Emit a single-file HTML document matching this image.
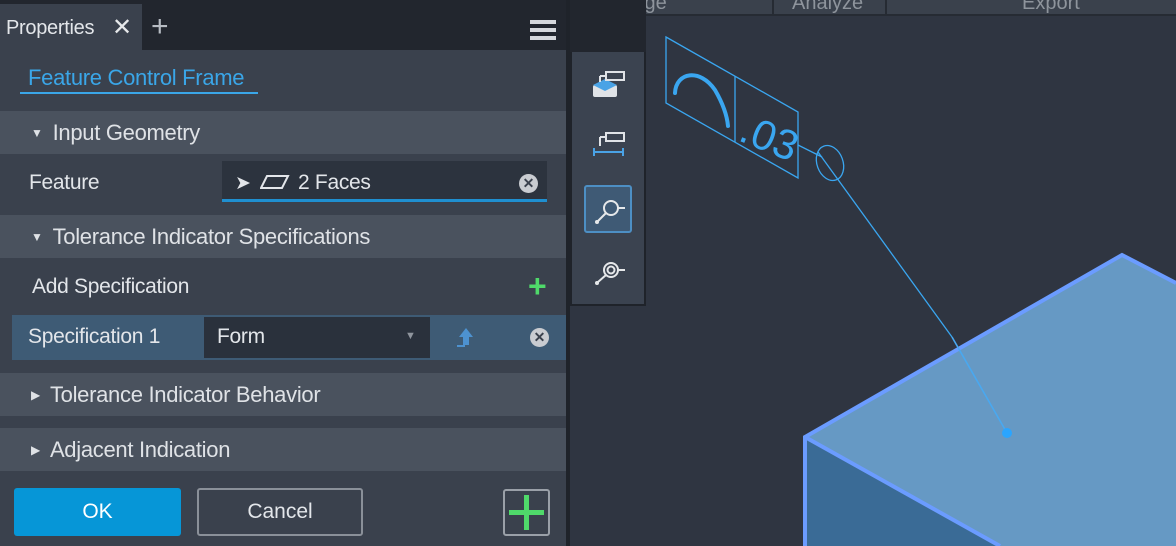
<!DOCTYPE html>
<html><head><style>
*{margin:0;padding:0;box-sizing:border-box}
body{width:1176px;height:546px;overflow:hidden;background:#2f3541;font-family:"Liberation Sans",sans-serif;position:relative;color:#e6e8ea}
.a{position:absolute}
.hdr{position:absolute;left:0;width:566px;height:43px;background:#4a525e;font-size:22px;color:#dfe2e6;line-height:43px;padding-left:31px;letter-spacing:-0.3px}
.tri{font-size:12px;margin-right:10px;position:relative;top:-3px}
.lbl{position:absolute;font-size:20px;color:#e3e6ea;letter-spacing:-0.3px}
.xc{position:absolute;width:19px;height:19px;border-radius:50%;background:#c9ccd1;color:#3a414d;font-size:14px;font-weight:bold;text-align:center;line-height:19px}
</style></head><body>
<svg class="a" style="left:0;top:0" width="1176" height="546">
<rect x="570" y="0" width="606" height="546" fill="#2f3541"/>
<rect x="645" y="0" width="531" height="15" fill="#3a414c"/>
<line x1="773" y1="0" x2="773" y2="15" stroke="#262b33" stroke-width="2"/>
<line x1="886" y1="0" x2="886" y2="15" stroke="#262b33" stroke-width="2"/>
<line x1="645" y1="15" x2="1176" y2="15" stroke="#262b33" stroke-width="2"/>
<text x="640" y="9" fill="#8e949c" font-size="20" font-family="Liberation Sans">ige</text>
<text x="792" y="9" fill="#8e949c" font-size="20" font-family="Liberation Sans">Analyze</text>
<text x="1022" y="9" fill="#8e949c" font-size="20" font-family="Liberation Sans">Export</text>
<polygon points="805,437 1122,255 1176,283 1176,546 1000,546" fill="#6699c4"/>
<polygon points="805,437 1000,546 805,546" fill="#3a6b96"/>
<polyline points="805,546 805,437 1122,255 1176,283" fill="none" stroke="#6b9cff" stroke-width="4"/>
<line x1="805" y1="437" x2="1000" y2="546" stroke="#6b9cff" stroke-width="4"/>
<g stroke="#3aa6f0" fill="none" stroke-width="1.3">
<polygon points="666,37 798,112 798,178 666,103"/>
<line x1="735" y1="76" x2="735" y2="142"/>
<line x1="798" y1="145" x2="822" y2="157"/>
<ellipse cx="830" cy="163" rx="13" ry="18" transform="rotate(-20 830 163)"/>
<line x1="818" y1="152" x2="952" y2="337"/>
<line x1="952" y1="337" x2="1007" y2="433" stroke="#49a8f0" stroke-width="1.6"/>
<path d="M675,93 C676,72 700,68 715,90 C722,102 727,115 728,126" stroke-width="4" stroke-linecap="round"/>
</g>
<circle cx="1007" cy="433" r="5" fill="#2aa5ff"/>
<text x="0" y="0" fill="#3aa6f0" font-size="42" font-family="Liberation Sans" transform="translate(737,140) rotate(22)">.03</text>
</svg>
<div class="a" style="left:566px;top:0;width:80px;height:52px;background:#22262e"></div>
<div class="a" style="left:570px;top:52px;width:76px;height:254px;background:#3b4350;border:2px solid #1f232a;border-top:none"></div>
<svg class="a" style="left:580px;top:60px" width="60" height="240">
<rect x="13" y="25" width="24" height="12" rx="2" fill="#e0e3e7"/><path d="M13,25 L25,19 L37,25 L25,31Z" fill="#4aa3e6"/>
<rect x="26" y="12" width="18" height="8" fill="none" stroke="#e0e3e7" stroke-width="2"/><path d="M20,16 H26 M20,16 V22" stroke="#e0e3e7" stroke-width="2"/>
<rect x="26" y="73" width="18" height="8" fill="none" stroke="#e0e3e7" stroke-width="2"/><path d="M20,77 H26 M20,77 V86" stroke="#e0e3e7" stroke-width="2"/>
<path d="M14,88 V96 M14,92 H43 M43,88 V96" stroke="#4aa3e6" stroke-width="2"/>
<rect x="5" y="126" width="46" height="46" rx="2" fill="#3f5a75" stroke="#4d8fc4" stroke-width="2"/>
<g stroke="#e6e8ea" stroke-width="2" fill="none"><circle cx="31" cy="148" r="7"/><path d="M38,148 H45 M26,153 L18,161"/><circle cx="31" cy="210" r="7"/><circle cx="31" cy="210" r="3.5"/><path d="M38,210 H45 M26,215 L18,222"/></g>
<circle cx="17" cy="162" r="2" fill="#e6e8ea"/><circle cx="17" cy="223" r="2" fill="#e6e8ea"/>
</svg>
<div class="a" style="left:0;top:0;width:566px;height:546px;background:#3a414d"></div>
<div class="a" style="left:566px;top:0;width:4px;height:546px;background:#1f232a"></div>
<div class="a" style="left:0;top:0;width:566px;height:50px;background:#22262e"></div>
<div class="a" style="left:0;top:4px;width:142px;height:46px;background:#3a414d"></div>
<div class="lbl" style="left:6px;top:17px;font-size:20px">Properties</div>
<div class="lbl" style="left:112px;top:13px;font-size:24px;color:#e6e8ea">✕</div>
<div class="lbl" style="left:151px;top:10px;font-size:30px;color:#b7bcc3">+</div>
<div class="a" style="left:530px;top:20px;width:26px;height:4px;background:#d5d8dc;box-shadow:0 8px 0 #d5d8dc,0 16px 0 #d5d8dc"></div>
<div class="lbl" style="left:28px;top:65px;color:#3aa6e8;font-size:22px">Feature Control Frame</div>
<div class="a" style="left:20px;top:92px;width:238px;height:2px;background:#3aa6e8"></div>
<div class="hdr" style="top:111px"><span class="tri">▼</span>Input Geometry</div>
<div class="lbl" style="left:29px;top:171px;font-size:21px">Feature</div>
<div class="a" style="left:222px;top:161px;width:325px;height:41px;background:#2c333e;border-bottom:3px solid #1f8fd0"></div>
<div class="lbl" style="left:235px;top:172px;font-size:19px">➤</div>
<svg class="a" style="left:260px;top:174px" width="30" height="16"><polygon points="7,2 28,2 22,14 1,14" fill="none" stroke="#e3e6ea" stroke-width="2"/></svg>
<div class="lbl" style="left:298px;top:171px;font-size:21px">2 Faces</div>
<div class="xc" style="left:519px;top:174px">✕</div>
<div class="hdr" style="top:215px"><span class="tri">▼</span>Tolerance Indicator Specifications</div>
<div class="lbl" style="left:32px;top:275px;font-size:21px">Add Specification</div>
<div class="lbl" style="left:528px;top:268px;color:#4fd96a;font-size:32px;font-weight:bold">+</div>
<div class="a" style="left:12px;top:315px;width:554px;height:45px;background:#3e5b75"></div>
<div class="lbl" style="left:28px;top:325px;font-size:21px">Specification 1</div>
<div class="a" style="left:204px;top:317px;width:226px;height:41px;background:#2a313c"></div>
<div class="lbl" style="left:217px;top:325px;font-size:21px">Form</div>
<div class="lbl" style="left:405px;top:330px;font-size:11px;color:#8f959d">▼</div>
<svg class="a" style="left:455px;top:326px" width="22" height="22"><path d="M11,2 L18,11 H14 V19 H8 V11 H4Z" fill="#4d92d0"/><path d="M2,20 H10" stroke="#4d92d0" stroke-width="2"/></svg>
<div class="xc" style="left:530px;top:328px">✕</div>
<div class="hdr" style="top:373px"><span class="tri">▶</span>Tolerance Indicator Behavior</div>
<div class="hdr" style="top:428px"><span class="tri">▶</span>Adjacent Indication</div>
<div class="a" style="left:14px;top:488px;width:167px;height:48px;background:#0696d7;border-radius:3px;text-align:center;line-height:48px;font-size:21px;color:#fff">OK</div>
<div class="a" style="left:197px;top:488px;width:166px;height:48px;border:2px solid #8a9099;border-radius:3px;text-align:center;line-height:44px;font-size:21px;color:#e3e6ea">Cancel</div>
<div class="a" style="left:503px;top:489px;width:47px;height:47px;border:2px solid #9aa0a8;border-radius:3px"></div>
<div class="a" style="left:524px;top:495px;width:5px;height:35px;background:#4fd96a"></div>
<div class="a" style="left:509px;top:510px;width:35px;height:5px;background:#4fd96a"></div>
</body></html>
